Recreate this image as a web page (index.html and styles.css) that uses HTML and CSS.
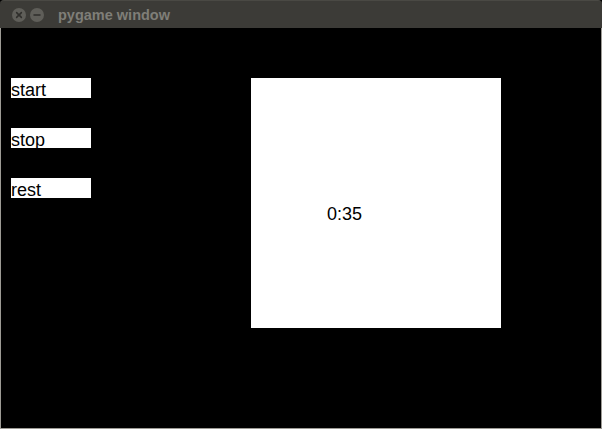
FILE: index.html
```html
<!DOCTYPE html>
<html>
<head>
<meta charset="utf-8">
<title>pygame window</title>
<link rel="stylesheet" href="styles.css">
</head>
<body>
<div class="window">
  <div class="titlebar">
    <div class="ctrl">
      <svg width="14" height="14" viewBox="0 0 14 14"><circle cx="7" cy="7" r="7" fill="#5f5e59"/><path d="M4.6 4.6 L9.4 9.4 M9.4 4.6 L4.6 9.4" stroke="#2f2e2b" stroke-width="1.5" stroke-linecap="round"/></svg>
    </div>
    <div class="ctrl">
      <svg width="14" height="14" viewBox="0 0 14 14"><circle cx="7" cy="7" r="7" fill="#5f5e59"/><path d="M4 7 L10 7" stroke="#2f2e2b" stroke-width="1.5" stroke-linecap="round"/></svg>
    </div>
    <span class="title">pygame window</span>
  </div>
  <div class="content">
    <div class="buttons">
      <div class="btn">start</div>
      <div class="btn">stop</div>
      <div class="btn">rest</div>
    </div>
    <div class="clock">0:35</div>
  </div>
</div>
</body>
</html>
```

FILE: styles.css
```css
html, body {
  margin: 0;
  padding: 0;
  background: #000;
}
.window {
  width: 602px;
  height: 429px;
  display: flex;
  flex-direction: column;
  background: #000;
}
.titlebar {
  height: 28px;
  flex: none;
  background: #3c3b37;
  border-top: 1px solid #4a4944;
  box-sizing: border-box;
  border-top-right-radius: 4px;
  border-top-left-radius: 4px;
  display: flex;
  align-items: center;
  padding-left: 12px;
  gap: 4px;
}
.ctrl {
  width: 14px;
  height: 14px;
  display: flex;
}
.title {
  margin-left: 10px;
  font-family: "Liberation Sans", Arial, sans-serif;
  font-weight: bold;
  font-size: 14.5px;
  color: #7f7e78;
}
.content {
  flex: 1;
  display: flex;
  align-items: flex-start;
  border: 1px solid #9d9b95;
  border-top: none;
  padding-top: 50px;
  padding-left: 10px;
  gap: 160px;
  font-family: "Liberation Sans", Arial, sans-serif;
  font-size: 18px;
  color: #000;
}
.buttons {
  display: flex;
  flex-direction: column;
  gap: 30px;
}
.btn {
  width: 80px;
  height: 20px;
  box-sizing: border-box;
  background: #fff;
  padding-top: 2px;
  line-height: 20px;
  overflow: visible;
  white-space: nowrap;
}
.clock {
  width: 250px;
  height: 250px;
  box-sizing: border-box;
  background: #fff;
  padding-left: 76px;
  padding-top: 126px;
  line-height: 20px;
}
```
